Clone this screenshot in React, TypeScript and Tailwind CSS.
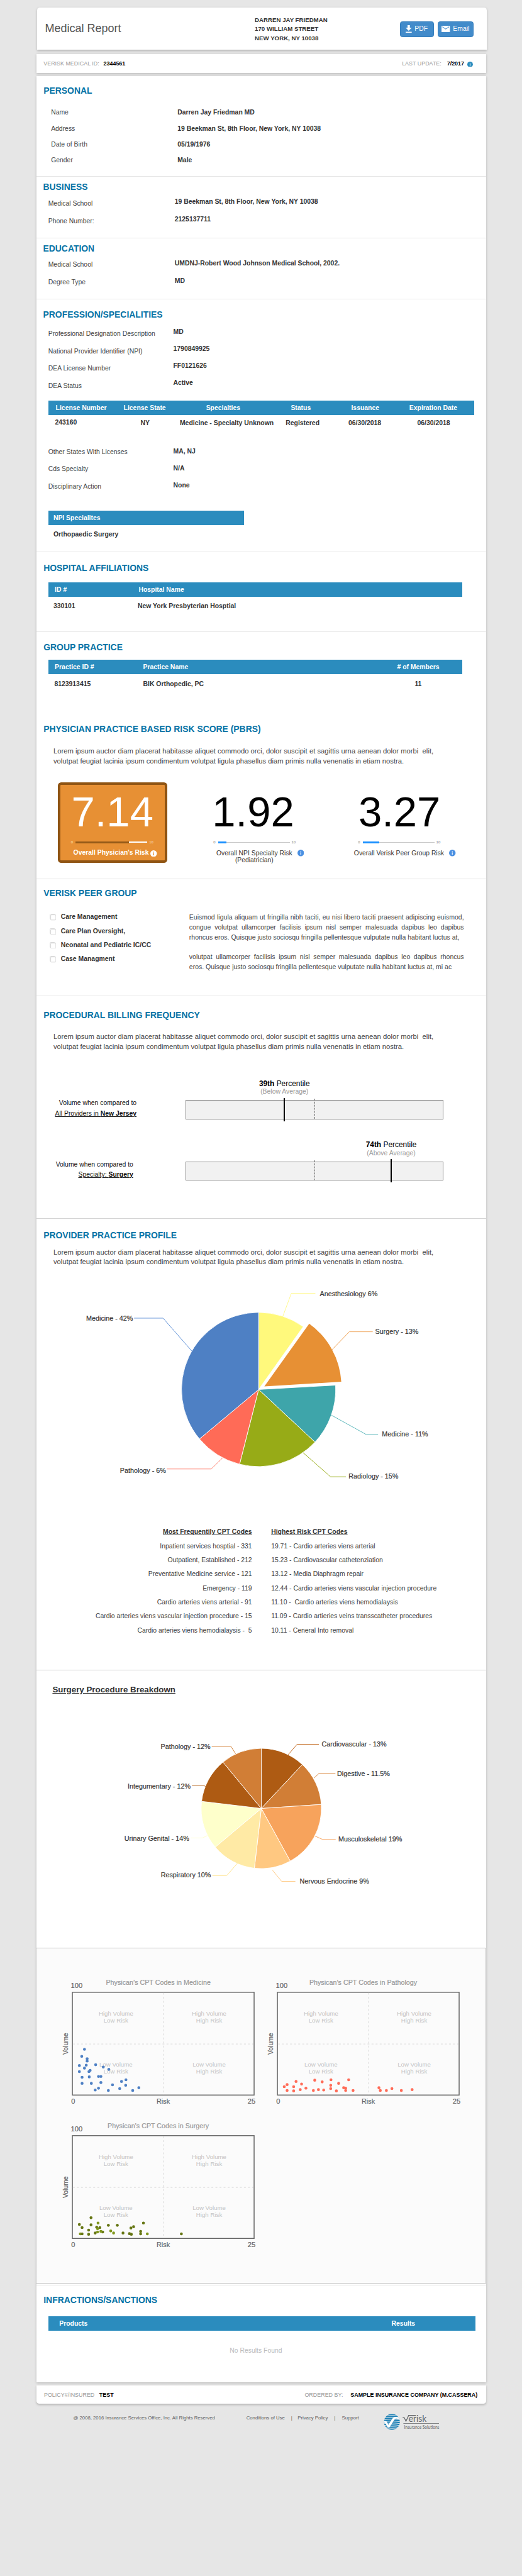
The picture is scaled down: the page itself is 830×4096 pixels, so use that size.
import type { ReactNode } from "react";

const LOREM_LINES = [
  "Lorem ipsum auctor diam placerat habitasse aliquet commodo orci, dolor suscipit et sagittis urna aenean dolor morbi \u00a0elit,",
  "volutpat feugiat lacinia ipsum condimentum volutpat ligula phasellus diam primis nulla venenatis in etiam nostra.",
];

function Heading({ children, className = "" }: { children: ReactNode; className?: string }) {
  return (
    <h2 className={`h-6 whitespace-nowrap pt-[0.8px] text-[18.7px] font-bold leading-6 text-[#0673a6] ${className}`}>{children}</h2>
  );
}

function Section({ children, className = "" }: { children: ReactNode; className?: string }) {
  return <section className={`flex flex-col items-start ${className}`}>{children}</section>;
}

function Lorem({ className = "" }: { className?: string }) {
  return (
    <p className={`ml-9 whitespace-nowrap text-[15.15px] leading-[21px] text-[#444] ${className}`}>
      {LOREM_LINES.map((line) => (
        <span key={line} className="block">
          {line}
        </span>
      ))}
    </p>
  );
}

function Fields({
  rows,
  className = "",
  labelClass,
  valueClass,
}: {
  rows: [string, string][];
  className?: string;
  labelClass: string;
  valueClass: string;
}) {
  return (
    <div className={`flex whitespace-nowrap text-[14px] ${className}`}>
      <div className={`shrink-0 text-[#444] ${labelClass}`}>
        {rows.map(([label]) => (
          <div key={label}>{label}</div>
        ))}
      </div>
      <div className={`font-bold text-[#333] ${valueClass}`}>
        {rows.map(([label, value]) => (
          <div key={label}>{value}</div>
        ))}
      </div>
    </div>
  );
}

function Band({ children, className = "" }: { children: ReactNode; className?: string }) {
  return (
    <div
      className={`ml-[25px] flex h-[31px] items-center whitespace-nowrap bg-[#2b8cbe] pt-px text-[14px] font-bold text-white ${className}`}
    >
      {children}
    </div>
  );
}

function InfoIcon({ disc, glyph, className = "" }: { disc: string; glyph: string; className?: string }) {
  return (
    <svg viewBox="0 0 14 14" className={className}>
      <circle cx="7" cy="7" r="7" fill={disc} />
      <rect x="6.1" y="3.1" width="1.9" height="1.8" fill={glyph} />
      <rect x="6.1" y="5.9" width="1.9" height="4.8" fill={glyph} />
    </svg>
  );
}

function ScoreBar({ value, dark = false }: { value: number; dark?: boolean }) {
  return (
    <div className={`flex h-3 w-[177px] items-center text-[8px] leading-3 ${dark ? "text-[#fbe3c6]" : "text-[#777]"}`}>
      <span className="w-[10px]">0</span>
      <div className={`relative h-[2px] w-[153px] ${dark ? "bg-white" : "bg-[#c8c8c8]"}`}>
        <div
          className={`absolute -top-px left-0 h-1 ${dark ? "bg-[#955a18]" : "bg-[#1a90ff]"}`}
          style={{ width: `${value * 10}%` }}
        />
      </div>
      <span className="ml-1">10</span>
    </div>
  );
}

function PercentileBar({
  rank,
  note,
  markerClass,
}: {
  rank: string;
  note: string;
  markerClass: string;
}) {
  return (
    <div className="relative mt-[49px] h-[41px] w-[551px] border-2 border-[#8a8a8a] bg-[#f1f1f1]">
      <div className="absolute -top-1 left-[274px] h-[43px] border-l-[1.5px] border-dashed border-[#666]" />
      <div className={`absolute -top-[6px] h-[50px] w-[3px] bg-black ${markerClass}`}>
        <div className="absolute -top-[40px] left-1/2 flex w-[140px] -translate-x-1/2 flex-col items-center whitespace-nowrap">
          <div className="text-[16px] leading-[19px] text-black">
            <b>{rank}</b> Percentile
          </div>
          <div className="text-[14px] leading-[15px] text-[#999]">{note}</div>
        </div>
      </div>
    </div>
  );
}

function slicePath(cx: number, cy: number, r: number, from: number, to: number) {
  const at = (deg: number) => {
    const a = (deg * Math.PI) / 180;
    return `${(cx + r * Math.sin(a)).toFixed(2)} ${(cy - r * Math.cos(a)).toFixed(2)}`;
  };
  return `M${cx} ${cy}L${at(from)}A${r} ${r} 0 ${to - from > 180 ? 1 : 0} 1 ${at(to)}Z`;
}

type Slice = { from: number; to: number; color: string; cx?: number; cy?: number };
type Callout = { text: string; x: number; y: number; end?: boolean; color: string; points: string };

function Pie({
  viewBox,
  cx,
  cy,
  r,
  slices,
  callouts,
  className,
}: {
  viewBox: string;
  cx: number;
  cy: number;
  r: number;
  slices: Slice[];
  callouts: Callout[];
  className: string;
}) {
  return (
    <svg viewBox={viewBox} className={className}>
      {slices.map((s) => (
        <path
          key={s.from}
          d={slicePath(s.cx ?? cx, s.cy ?? cy, r, s.from, s.to)}
          fill={s.color}
          stroke="#fff"
          strokeWidth={s.cx ? 0 : 1.2}
        />
      ))}
      {callouts.map((c) => (
        <g key={c.text}>
          <polyline points={c.points} fill="none" stroke={c.color} strokeWidth="1.3" />
          <text
            x={c.x}
            y={c.y + 5.2}
            textAnchor={c.end ? "end" : "start"}
            fontSize="14.5"
            fill="#333"
            stroke="#333"
            strokeWidth="0.25"
          >
            {c.text}
          </text>
        </g>
      ))}
    </svg>
  );
}

const PROFILE_SLICES: Slice[] = [
  { from: 0, to: 35.4, color: "#fff97c" },
  { from: 86.8, to: 133, color: "#3ea5aa" },
  { from: 133, to: 194.3, color: "#97ab17" },
  { from: 194.3, to: 230.1, color: "#ff6b57" },
  { from: 230.1, to: 360, color: "#4e80c4" },
  { from: 35.6, to: 86.5, color: "#e79034", cx: 564.5, cy: 2960.5 },
];

const PROFILE_CALLOUTS: Callout[] = [
  { text: "Anesthesiology 6%", x: 683, y: 2762.3, color: "#fff98c", points: "604,2811 622,2762 673.5,2762" },
  { text: "Surgery - 13%", x: 801, y: 2843.4, color: "#ee9f4f", points: "708,2883 746,2843.8 796,2843.8" },
  { text: "Medicine - 11%", x: 815.5, y: 3062.3, color: "#56b4b8", points: "708,3022 782.6,3063.4 807.4,3063.4" },
  { text: "Radiology - 15%", x: 744.5, y: 3152.2, color: "#97ab17", points: "647.4,3102 706,3153.4 738.6,3153.4" },
  { text: "Pathology - 6%", x: 354.5, y: 3140.4, end: true, color: "#ff7e6c", points: "475.2,3113.2 451,3136.7 356,3136.7" },
  { text: "Medicine - 42%", x: 284, y: 2815.1, end: true, color: "#5b8ed6", points: "409.5,2884.7 348.3,2814.7 286.4,2814.7" },
];

const SURGERY_SLICES: Slice[] = [
  { from: 0, to: 43.1, color: "#ae5b13" },
  { from: 43.1, to: 86.2, color: "#d17e36" },
  { from: 86.2, to: 151.2, color: "#f7a35c" },
  { from: 151.2, to: 186.6, color: "#ffc881" },
  { from: 186.6, to: 230, color: "#ffeaa5" },
  { from: 230, to: 276.8, color: "#feffcb" },
  { from: 276.8, to: 320.4, color: "#ae5b13" },
  { from: 320.4, to: 360, color: "#d17e36" },
];

const SURGERY_CALLOUTS: Callout[] = [
  { text: "Cardiovascular - 13%", x: 687, y: 3723.2, color: "#c2691f", points: "615.5,3746 634.6,3724 681,3724" },
  { text: "Digestive - 11.5%", x: 720, y: 3786.4, color: "#d9853c", points: "670.3,3796 681.2,3786.4 716.3,3786.4" },
  { text: "Musculoskeletal 19%", x: 722.5, y: 3926, color: "#f7a35c", points: "672.9,3920 688.8,3927.1 716.9,3927.1" },
  { text: "Nervous Endocrine 9%", x: 640, y: 4016, color: "#ffc881", points: "581.7,3992.5 601.5,4016.8 630.8,4016.8" },
  { text: "Respiratory 10%", x: 450.5, y: 4003.2, end: true, color: "#ffe38c", points: "507,3978.2 484.1,4004.3 453.5,4004.3" },
  { text: "Urinary Genital - 14%", x: 404, y: 3925.3, end: true, color: "#feffcb", points: "442.7,3918.9 432.4,3924 408,3924" },
  { text: "Integumentary - 12%", x: 407, y: 3813.2, end: true, color: "#ae5b13", points: "438.8,3814.6 435.6,3811.4 410,3811.4" },
  { text: "Pathology - 12%", x: 449.5, y: 3729.3, end: true, color: "#d17e36", points: "503.2,3744.3 493,3728.2 452.2,3728.2" },
];

type Dot = [number, number, boolean?];

const MEDICINE_DOTS: Dot[] = [
  [26.8, 122.8], [21, 137.9], [32.5, 142.9], [32.5, 147.8], [15.9, 157.6], [30.6, 156.7], [26.8, 162.9], [15.9, 170.5],
  [36.4, 170.5], [38.9, 167.9], [50.7, 155.8], [67, 160.7], [78.8, 165.6], [21.7, 182.6], [37, 181.7], [56.8, 180.8],
  [61.9, 180.8], [21.7, 195.5], [41.5, 195.5], [61.9, 193.8], [49.7, 209.8], [56.8, 205.8], [86.7, 198.7], [77.8, 210.7],
  [102, 206.7], [105.9, 191.5], [115.4, 187.9], [114.8, 199.6], [129.8, 210.7], [142.9, 204.9],
];

const PATHOLOGY_DOTS: Dot[] = [
  [15.6, 202.7], [21.7, 198.2], [21.7, 210.7], [35.7, 202.7], [35.7, 211.6], [40.8, 191.5], [49.7, 208.9], [52.6, 196.9],
  [61.9, 205.8], [77.8, 210.7], [80.7, 188.8], [88.6, 208.9], [96.6, 192.4], [99.8, 209.8], [115.4, 187.9], [114.8, 199.6],
  [114.8, 206.7], [126.9, 211.6], [131.7, 195.5], [142.5, 204.9], [146.7, 205.8], [146.7, 210.7], [153.1, 187.9],
  [162.6, 210.7], [217.8, 204.9], [220.7, 210.7], [233.7, 210.7], [245.5, 206.7], [265.6, 210.7], [288.6, 208.9],
];

const SURGERY_DOTS: Dot[] = [
  [15.9, 190.6], [21.7, 197.3], [17.9, 210.7, true], [21.7, 210.7], [35.7, 202.7], [35.7, 211.6], [40.8, 176.3],
  [40.8, 191.5], [49.7, 208.9], [52.9, 196.4], [55.8, 187.5, true], [54.8, 199.6, true], [54.8, 206.7, true],
  [59.6, 197.3], [65.7, 206.7], [61.9, 205.4, true], [77.8, 192.4], [82.9, 204.5, true], [89, 208.9, true],
  [96.9, 192.4], [109.1, 208.9], [122.8, 210.3], [126, 198.2], [126.9, 211.6], [131.7, 195.5], [146.7, 205.4],
  [146.7, 210.7], [152.7, 187.5], [161, 210.7, true], [233.7, 210.7],
];

const QUADRANTS: [number, number, string, string][] = [
  [94, 46, "High Volume", "Low Risk"],
  [293, 46, "High Volume", "High Risk"],
  [94, 155, "Low Volume", "Low Risk"],
  [293, 155, "Low Volume", "High Risk"],
];

function Scatter({ title, titleX, dots, color, altColor }: { title: string; titleX: number; dots: Dot[]; color: string; altColor?: string }) {
  return (
    <svg viewBox="-30 -35 430 280" className="h-[280px] w-[430px]">
      <text x={titleX} y="-14.5" textAnchor="middle" fontSize="14.4" fill="#999" stroke="#999" strokeWidth="0.3">
        {title}
      </text>
      <rect x="1" y="1" width="388" height="219.5" fill="none" stroke="#666" strokeWidth="2" />
      <line x1="195.5" y1="2" x2="195.5" y2="220" stroke="#ccc" strokeWidth="1" strokeDasharray="4 4.7" />
      <line x1="2" y1="111.5" x2="388" y2="111.5" stroke="#ccc" strokeWidth="1" strokeDasharray="4 4.7" />
      {QUADRANTS.map(([x, y, top, bottom]) => (
        <text key={`${x}-${y}`} x={x} textAnchor="middle" fontSize="13" fill="#c4c4c4">
          <tspan x={x} y={y + 4.6}>
            {top}
          </tspan>
          <tspan x={x} y={y + 19.4}>
            {bottom}
          </tspan>
        </text>
      ))}
      {dots.map(([x, y, alt], i) => (
        <circle key={i} cx={x} cy={y} r="3.1" fill={alt && altColor ? altColor : color} />
      ))}
      <g fontSize="15" fill="#666" stroke="#666" strokeWidth="0.3">
        <text x="-2.5" y="-7.5">100</text>
        <text x="-1.5" y="239.3">0</text>
        <text x="195" y="239.3" textAnchor="middle" fontSize="14.5">Risk</text>
        <text x="392" y="239.3" textAnchor="end">25</text>
        <text x="-13.3" y="111" textAnchor="middle" fontSize="14" transform="rotate(-90 -13.3 111)" dy="4.5">
          Volume
        </text>
      </g>
    </svg>
  );
}

function CopyIcon() {
  return (
    <svg viewBox="0 0 14 14" className="mr-[10px] h-[14px] w-[14px]" fill="#fff" stroke="#ccc" strokeWidth="1">
      <rect x="0.7" y="0.7" width="11" height="11" rx="1.5" />
      <rect x="2.2" y="2.2" width="11" height="11" rx="1.5" />
    </svg>
  );
}

function VeriskLogo() {
  return (
    <svg viewBox="818 5150 150 50" className="h-[50px] w-[150px] overflow-visible">
      <defs>
        <clipPath id="globe">
          <circle cx="837" cy="5171.5" r="17" />
        </clipPath>
      </defs>
      <g clipPath="url(#globe)">
        <circle cx="837" cy="5171.5" r="17" fill="#cfe0ea" />
        {[0, 1, 2, 3, 4, 5, 6, 7, 8].map((i) => (
          <path
            key={i}
            d={`M819 ${5157.2 + i * 4}Q837 ${5154.6 + i * 4} 855 ${5157.2 + i * 4}`}
            fill="none"
            stroke="#1b7fb4"
            strokeWidth="2.6"
          />
        ))}
        <path
          d="M819 5170.5Q824 5167.5 826.5 5171.5L829.3 5177.5L839 5163Q841.5 5160.4 845 5160.6L853 5161.5V5165L846 5164.6Q843.8 5164.6 842.6 5166.2L831.5 5183.5H828.2L823.5 5174.8Q822 5172.8 819 5174.2Z"
          fill="#fff"
        />
      </g>
      <g fill="#5f6265" fontFamily="Lato, sans-serif">
        <path
          d="M860 5162.2H863.2L867 5170L872.8 5157.6H888"
          fill="none"
          stroke="#5f6265"
          strokeWidth="1.7"
        />
        <text x="872.6" y="5171.5" fontSize="21" textLength="38.5" lengthAdjust="spacingAndGlyphs">
          erisk
        </text>
        <rect x="861.5" y="5174.5" width="76" height="1" />
        <text x="863" y="5186.3" fontSize="10" textLength="75" lengthAdjust="spacingAndGlyphs">
          Insurance Solutions
        </text>
      </g>
    </svg>
  );
}

const FREQUENT_CODES = [
  "Inpatient services hosptial - 331",
  "Outpatient, Established - 212",
  "Preventative Medicine service - 121",
  "Emergency - 119",
  "Cardio arteries viens arterial - 91",
  "Cardio arteries viens vascular injection procedure - 15",
  "Cardio arteries viens hemodialaysis - \u00a05",
];

const RISK_CODES = [
  "19.71 - Cardio arteries viens arterial",
  "15.23 - Cardiovascular cathetenziation",
  "13.12 - Media Diaphragm repair",
  "12.44 - Cardio arteries viens vascular injection procedure",
  "11.10 - \u00a0Cardio arteries viens hemodialaysis",
  "11.09 - Cardio artieries veins transscatheter procedures",
  "10.11 - Ceneral Into removal",
];

export default function App() {
  return (
    <div className="h-[5500.2px] w-full overflow-hidden bg-[#e6e6e6] pl-[78px] pt-4 font-['Liberation_Sans',Arial,sans-serif] text-[#333] [zoom:0.7447]">
      <header className="ml-px flex h-[90px] w-[960px] rounded-t-[6px] bg-white shadow-[0_2px_5px_rgba(0,0,0,0.22)]">
        <h1 className="w-[465px] pl-[17px] pt-[30px] text-[24.2px] leading-[30px] text-[#555]">Medical Report</h1>
        <address className="w-[310px] whitespace-nowrap pt-[17px] text-[13px] font-bold not-italic leading-5 text-[#333]">
          DARREN JAY FRIEDMAN
          <br />
          170 WILLIAM STREET
          <br />
          NEW YORK, NY 10038
        </address>
        <div className="flex gap-2 pt-[29px] text-[14px] text-white">
          <button className="flex h-[34px] w-[72px] items-center rounded-[5px] border border-[#357ebd] bg-[#428bca] pl-[11px]">
            <svg viewBox="0 0 13 16" className="mr-[6px] h-4 w-[13px]" fill="#fff">
              <path d="M4 0h5v5.5h4L6.500 12 0 5.500h4zM0 14h13v2H0z" />
            </svg>
            PDF
          </button>
          <button className="flex h-[34px] w-[77px] items-center rounded-[5px] border border-[#357ebd] bg-[#428bca] pl-[8px]">
            <svg viewBox="0 0 18 14" className="mr-[6px] h-[14px] w-[18px]">
              <rect width="18" height="14" rx="1.5" fill="#fff" />
              <path d="M1.800 2.200L9 6.900L16.200 2.200" fill="none" stroke="#428bca" strokeWidth="1.5" />
            </svg>
            Email
          </button>
        </div>
      </header>

      <div className="mt-[10px] flex h-10 w-[960px] items-center bg-white pb-[1px] pl-[15px] pr-7 pt-[3px] text-[12px] text-[#999] shadow-[0_2px_5px_rgba(0,0,0,0.22)]">
        <span className="w-[128px]">VERISK MEDICAL ID:</span>
        <b className="text-black">2344561</b>
        <span className="ml-auto">LAST UPDATE:</span>
        <b className="ml-3 text-black">7/2017</b>
        <InfoIcon disc="#2b8cbe" glyph="#d5e9f4" className="ml-[7px] h-3 w-3" />
      </div>

      <main className="mt-[7px] h-[4923px] w-[960px] bg-white shadow-[0_2px_5px_rgba(0,0,0,0.22)]">
        <Section className="h-[215px] border-b border-[#e6e6e6] pl-[15px] pt-[19px]">
          <Heading>PERSONAL</Heading>
          <Fields
            className="mt-[17.6px] pl-4"
            labelClass="w-[270px] leading-[34px]"
            valueClass="leading-[34px]"
            rows={[
              ["Name", "Darren Jay Friedman MD"],
              ["Address", "19 Beekman St, 8th Floor, New York, NY 10038"],
              ["Date of Birth", "05/19/1976"],
              ["Gender", "Male"],
            ]}
          />
        </Section>

        <Section className="h-[131px] border-b border-[#e6e6e6] pl-[14px] pt-[9px]">
          <Heading>BUSINESS</Heading>
          <Fields
            className="pl-[11px]"
            labelClass="w-[270px] pt-[5.4px] leading-[37px]"
            valueClass="pt-[1.6px] leading-[38px]"
            rows={[
              ["Medical School", "19 Beekman St, 8th Floor, New York, NY 10038"],
              ["Phone Number:", "2125137711"],
            ]}
          />
        </Section>

        <Section className="h-[130px] border-b border-[#e6e6e6] pl-[14px] pt-[9.5px]">
          <Heading>EDUCATION</Heading>
          <Fields
            className="pl-[11px]"
            labelClass="w-[270px] pt-[4.8px] leading-[37px]"
            valueClass="pt-[1.4px] leading-[38px]"
            rows={[
              ["Medical School", "UMDNJ-Robert Wood Johnson Medical School, 2002."],
              ["Degree Type", "MD"],
            ]}
          />
        </Section>

        <Section className="h-[540px] border-b border-[#e6e6e6] pt-[21.5px]">
          <Heading className="ml-[14px]">PROFESSION/SPECIALITIES</Heading>
          <Fields
            className="h-[170.5px] pl-[25px]"
            labelClass="w-[267px] pt-[9.9px] leading-[37px]"
            valueClass="pt-[7.4px] leading-[36px]"
            rows={[
              ["Professional Designation Description", "MD"],
              ["National Provider Identifier (NPI)", "1790849925"],
              ["DEA License Number", "FF0121626"],
              ["DEA Status", "Active"],
            ]}
          />
          <Band className="w-[910px] pl-4">
            <span className="w-[145px]">License Number</span>
            <span className="w-[176px]">License State</span>
            <span className="w-[181px]">Specialties</span>
            <span className="w-[129px]">Status</span>
            <span className="w-[124px]">Issuance</span>
            <span>Expiration Date</span>
          </Band>
          <div className="flex h-[60px] whitespace-nowrap pl-[39.5px] pt-[5.9px] text-[14px] font-bold leading-6">
            <span className="-mt-[2px] w-[182.5px]">243160</span>
            <span className="w-[84px]">NY</span>
            <span className="w-[226px]">Medicine - Specialty Unknown</span>
            <span className="w-[134px]">Registered</span>
            <span className="w-[147px]">06/30/2018</span>
            <span>06/30/2018</span>
          </div>
          <Fields
            className="h-[144px] pl-[25px]"
            labelClass="w-[267px] pt-[0.6px] leading-[36.8px]"
            valueClass="pt-[1px] leading-[36px]"
            rows={[
              ["Other States With Licenses", "MA, NJ"],
              ["Cds Specialty", "N/A"],
              ["Disciplinary Action", "None"],
            ]}
          />
          <Band className="w-[418px] pl-[11px]">NPI Specialites</Band>
          <div className="mt-[9px] pl-9 text-[14px] font-bold leading-6">Orthopaedic Surgery</div>
        </Section>

        <Section className="h-[170px] border-b border-[#e6e6e6] pt-[21.5px]">
          <Heading className="ml-[15px]">HOSPITAL AFFILIATIONS</Heading>
          <Band className="mt-[18.5px] w-[884px] pl-[14px]">
            <span className="w-[179px]">ID #</span>
            <span>Hospital Name</span>
          </Band>
          <div className="mt-[8.9px] flex pl-9 text-[14px] font-bold leading-6">
            <span className="w-[180px]">330101</span>
            <span>New York Presbyterian Hosptial</span>
          </div>
        </Section>

        <Section className="h-[171px] pt-[21.5px]">
          <Heading className="ml-[15px]">GROUP PRACTICE</Heading>
          <Band className="mt-[14.5px] w-[884px] pl-[14px]">
            <span className="w-[188.5px]">Practice ID #</span>
            <span className="w-[542.5px]">Practice Name</span>
            <span># of Members</span>
          </Band>
          <div className="mt-[8.9px] flex pl-[38px] text-[14px] font-bold leading-6">
            <span className="w-[189.5px]">8123913415</span>
            <span className="w-[580px]">BIK Orthopedic, PC</span>
            <span>11</span>
          </div>
        </Section>

        <Section className="h-[357px] border-b border-[#e6e6e6] pt-[24.5px]">
          <Heading className="ml-[15px]">PHYSICIAN PRACTICE BASED RISK SCORE (PBRS)</Heading>
          <Lorem className="mt-[25.6px]" />
          <div className="mt-[34.9px] flex whitespace-nowrap pl-[45px] text-[14px] leading-4">
            <div className="flex h-[172px] w-[234px] flex-col items-center rounded-[7px] border-[6px] border-[#8f5413] bg-[#e79034] pt-[11.2px] text-white">
              <div className="text-[90px] leading-[90px]">7.14</div>
              <div className="mt-[14.800px]">
                <ScoreBar value={7.4} dark />
              </div>
              <div className="relative right-[3px] mt-[8.800px] font-bold">
                Overall Physician's Risk
                <InfoIcon disc="#fff" glyph="#e79034" className="absolute left-full top-[2px] ml-1 h-[14px] w-[14px]" />
              </div>
            </div>
            <div className="ml-[70px] flex w-[234px] flex-col items-center pt-[17.200px]">
              <div className="mr-[7px] text-[90px] leading-[90px] text-black">1.92</div>
              <div className="mt-[14.800px]">
                <ScoreBar value={1.2} />
              </div>
              <div className="relative right-px mt-[8.800px] text-center text-[13.9px]">
                Overall NPI Specialty Risk
                <br />
                (Pediatrician)
                <InfoIcon disc="#4a90e2" glyph="#dbe9fa" className="absolute left-full top-[1px] ml-[11px] h-[14px] w-[14px]" />
              </div>
            </div>
            <div className="ml-[75px] flex w-[234px] flex-col items-center pt-[17.200px]">
              <div className="text-[90px] leading-[90px] text-black">3.27</div>
              <div className="mt-[14.800px]">
                <ScoreBar value={2.3} />
              </div>
              <div className="relative right-px mt-[8.800px] text-[13.9px]">
                Overall Verisk Peer Group Risk
                <InfoIcon disc="#4a90e2" glyph="#dbe9fa" className="absolute left-full top-[1px] ml-[11px] h-[14px] w-[14px]" />
              </div>
            </div>
          </div>
        </Section>

        <Section className="h-[250px] border-b border-[#e6e6e6] pt-[18.5px]">
          <Heading className="ml-[15px]">VERISK PEER GROUP</Heading>
          <div className="flex whitespace-nowrap">
            <ul className="w-[326px] pl-7 pt-[24.200px] text-[14px] font-bold leading-[30px]">
              {["Care Management", "Care Plan Oversight,", "Neonatal and Pediatric IC/CC", "Case Managment"].map((item) => (
                <li key={item} className="flex items-center">
                  <CopyIcon />
                  {item}
                </li>
              ))}
            </ul>
            <div className="w-[586.500px] pt-[29.700px] text-[14.1px] leading-[21px] text-[#444]">
              <p>
                <span className="block [text-align-last:justify]">
                  Euismod ligula aliquam ut fringilla nibh taciti, eu nisi libero taciti praesent adipiscing euismod,
                </span>
                <span className="block whitespace-normal [text-align-last:justify]">
                  congue volutpat ullamcorper facilisis ipsum nisl semper malesuada dapibus leo dapibus
                </span>
                <span className="block">
                  rhoncus eros. Quisque justo sociosqu fringilla pellentesque vulputate nulla habitant luctus at,
                </span>
              </p>
              <p className="mt-[21.300px]">
                <span className="block whitespace-normal [text-align-last:justify]">
                  volutpat ullamcorper facilisis ipsum nisl semper malesuada dapibus leo dapibus rhoncus
                </span>
                <span className="block">
                  eros. Quisque justo sociosqu fringilla pellentesque vulputate nulla habitant luctus at, mi ac
                </span>
              </p>
            </div>
          </div>
        </Section>

        <Section className="h-[476px] border-b border-[#d4d4d4] pt-[29.5px]">
          <Heading className="ml-[15px]">PROCEDURAL BILLING FREQUENCY</Heading>
          <Lorem className="mt-[23.6px]" />
          <div className="mt-[53.9px] flex h-[131px] text-[14px] leading-[22px] text-[#111]">
            <div className="mr-[104px] w-[213.5px] pt-[45.4px] text-right">
              Volume when compared to
              <br />
              <span className="underline">
                All Providers in <b>New Jersey</b>
              </span>
            </div>
            <PercentileBar rank="39th" note="(Below Average)" markerClass="left-[209px]" />
          </div>
          <div className="flex h-[131px] text-[14px] leading-[22px] text-[#111]">
            <div className="mr-[111px] w-[206.5px] pt-[45.4px] text-right">
              Volume when compared to
              <br />
              <span className="underline">
                Specialty: <b>Surgery</b>
              </span>
            </div>
            <PercentileBar rank="74th" note="(Above Average)" markerClass="left-[437px]" />
          </div>
        </Section>

        <Section className="h-[964px] border-b border-[#d0d0d0] pt-[22.5px]">
          <Heading className="ml-[15px]">PROVIDER PRACTICE PROFILE</Heading>
          <Lorem className="mt-[14.2px]" />
          <Pie
            viewBox="78 2710 960 490"
            className="mt-[4.3px] h-[490px] w-[960px]"
            cx={552.3}
            cy={2967}
            r={164.6}
            slices={PROFILE_SLICES}
            callouts={PROFILE_CALLOUTS}
          />
          <div className="mt-[56.8px] flex gap-[41px] whitespace-nowrap text-[14px] leading-[30px] text-[#3c3c3c]">
            <div className="w-[460px] text-right">
              <div className="font-bold text-[#333] underline">Most Frequentily CPT Codes</div>
              {FREQUENT_CODES.map((code) => (
                <div key={code}>{code}</div>
              ))}
            </div>
            <div>
              <div className="font-bold text-[#333] underline">Highest Risk CPT Codes</div>
              {RISK_CODES.map((code) => (
                <div key={code}>{code}</div>
              ))}
            </div>
          </div>
        </Section>

        <Section className="h-[592px] pt-[29px]">
          <h3 className="ml-[34px] h-6 text-[17.9px] font-bold leading-6 underline">Surgery Procedure Breakdown</h3>
          <Pie
            viewBox="78 3640 960 460"
            className="mt-5 h-[460px] w-[960px]"
            cx={558}
            cy={3861}
            r={128.4}
            slices={SURGERY_SLICES}
            callouts={SURGERY_CALLOUTS}
          />
        </Section>

        <section className="-ml-[1.5px] grid h-[717px] w-[961px] grid-cols-[430px_430px] content-start gap-x-2 gap-y-[26px] border border-[#c4c4c4] bg-[#fbfbfb] pl-[45.5px] pt-[58px]">
          <Scatter title="Physican’s CPT Codes in Medicine" titleX={184.4} dots={MEDICINE_DOTS} color="#4e80c4" />
          <Scatter title="Physican’s CPT Codes in Pathology" titleX={184.2} dots={PATHOLOGY_DOTS} color="#ff6b57" />
          <Scatter title="Physican’s CPT Codes in Surgery" titleX={184.4} dots={SURGERY_DOTS} color="#667614" altColor="#7f961c" />
        </section>

        <Section className="mt-[2px] h-[208px] border-t border-[#e6e6e6] pt-[20.300px]">
          <Heading className="ml-[15px]">INFRACTIONS/SANCTIONS</Heading>
          <Band className="mt-[22.700px] w-[912px] pl-[23.5px]">
            <span className="w-[709.500px]">Products</span>
            <span>Results</span>
          </Band>
          <div className="w-[937px] pt-[30.5px] text-center text-[14px] leading-6 text-[#bbb]">No Results Found</div>
        </Section>
      </main>

      <div className="mt-[7px] flex h-10 w-[960px] items-center whitespace-nowrap rounded-b-[6px] bg-white pl-4 pr-[18.5px] pt-[2px] text-[12px] text-[#999] shadow-[0_2px_5px_rgba(0,0,0,0.22)]">
        <span className="w-[118px]">POLICY#/INSURED</span>
        <b className="text-black">TEST</b>
        <span className="ml-auto">ORDERED BY:</span>
        <b className="ml-4 text-black">SAMPLE INSURANCE COMPANY (M.CASSERA)</b>
      </div>

      <footer className="flex whitespace-nowrap pl-[78.5px] pt-[17px] text-[10.4px] text-[#5c5c5c]">
        <span className="w-[369.500px] pt-[5.6px] leading-4">
          @ 2008, 2016 Insurance Services Office, Inc. All Rights Reserved
        </span>
        <nav className="flex w-[292px] pt-[5.6px] leading-4">
          <span className="w-[95.500px]">Conditions of Use</span>
          <span className="w-[14px]">|</span>
          <span className="w-[78px]">Privacy Policy</span>
          <span className="w-[16.500px]">|</span>
          <span>Support</span>
        </nav>
        <VeriskLogo />
      </footer>
    </div>
  );
}
